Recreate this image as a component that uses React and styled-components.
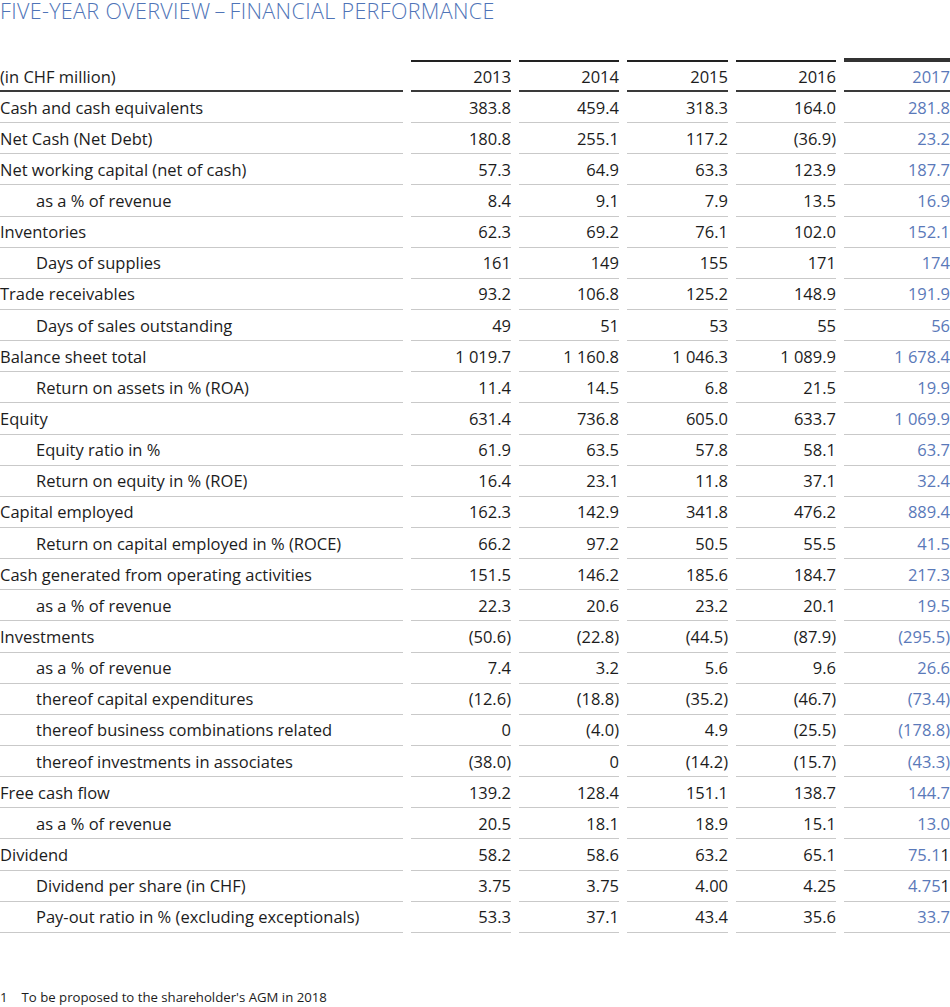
import React from "react";
import styled, { createGlobalStyle } from "styled-components";

const Global = createGlobalStyle`
  html, body { margin: 0; padding: 0; background: #fff; }
  body { font-family: "Open Sans", "Noto Sans", sans-serif; color: #1c1c1c; }
`;

const Page = styled.div`
  width: 950px;
  height: 1007px;
  display: flex;
  flex-direction: column;
  overflow: hidden;
`;

const Title = styled.h1`
  margin: 0;
  font-family: "Open Sans", sans-serif;
  font-weight: 300;
  font-size: 21.5px;
  line-height: 22px;
  letter-spacing: 0.35px;
  color: #4f74b7;
  white-space: nowrap;
`;

const Table = styled.div`
  margin-top: 38px;
  display: grid;
  grid-template-columns: 403px 100px 100px 101px 100px 1fr;
  column-gap: 8px;
`;

const HeadCell = styled.div`
  height: 28px;
  border-top: ${(p) =>
    p.$blank ? "2px solid transparent" : p.$current ? "4px solid #333" : "2px solid #222"};
  margin-top: ${(p) => (p.$current ? "-2px" : "0")};
  border-bottom: 2px solid #3a3a3a;
  display: flex;
  align-items: center;
  justify-content: ${(p) => (p.$label ? "flex-start" : "flex-end")};
  font-size: 16.5px;
  color: ${(p) => (p.$current ? "#5a79b9" : "#1c1c1c")};
  white-space: nowrap;
`;

const Cell = styled.div`
  height: 30.15px;
  border-bottom: 1px solid #c9c9c9;
  display: flex;
  align-items: center;
  justify-content: ${(p) => (p.$label ? "flex-start" : "flex-end")};
  padding-left: ${(p) => (p.$indent ? "36px" : "0")};
  font-size: 16.5px;
  color: ${(p) => (p.$current ? "#5a79b9" : "#1c1c1c")};
  white-space: nowrap;
`;

const Note = styled.span`
  color: #1c1c1c;
`;

const Footnote = styled.div`
  margin-top: auto;
  margin-bottom: 1px;
  display: flex;
  gap: 14px;
  font-size: 13.2px;
  line-height: 18px;
  color: #1c1c1c;
`;

const years = ["2013", "2014", "2015", "2016", "2017"];

const rows = [
  ["Cash and cash equivalents", 0, ["383.8", "459.4", "318.3", "164.0", "281.8"]],
  ["Net Cash (Net Debt)", 0, ["180.8", "255.1", "117.2", "(36.9)", "23.2"]],
  ["Net working capital (net of cash)", 0, ["57.3", "64.9", "63.3", "123.9", "187.7"]],
  ["as a % of revenue", 1, ["8.4", "9.1", "7.9", "13.5", "16.9"]],
  ["Inventories", 0, ["62.3", "69.2", "76.1", "102.0", "152.1"]],
  ["Days of supplies", 1, ["161", "149", "155", "171", "174"]],
  ["Trade receivables", 0, ["93.2", "106.8", "125.2", "148.9", "191.9"]],
  ["Days of sales outstanding", 1, ["49", "51", "53", "55", "56"]],
  ["Balance sheet total", 0, ["1 019.7", "1 160.8", "1 046.3", "1 089.9", "1 678.4"]],
  ["Return on assets in % (ROA)", 1, ["11.4", "14.5", "6.8", "21.5", "19.9"]],
  ["Equity", 0, ["631.4", "736.8", "605.0", "633.7", "1 069.9"]],
  ["Equity ratio in %", 1, ["61.9", "63.5", "57.8", "58.1", "63.7"]],
  ["Return on equity in % (ROE)", 1, ["16.4", "23.1", "11.8", "37.1", "32.4"]],
  ["Capital employed", 0, ["162.3", "142.9", "341.8", "476.2", "889.4"]],
  ["Return on capital employed in % (ROCE)", 1, ["66.2", "97.2", "50.5", "55.5", "41.5"]],
  ["Cash generated from operating activities", 0, ["151.5", "146.2", "185.6", "184.7", "217.3"]],
  ["as a % of revenue", 1, ["22.3", "20.6", "23.2", "20.1", "19.5"]],
  ["Investments", 0, ["(50.6)", "(22.8)", "(44.5)", "(87.9)", "(295.5)"]],
  ["as a % of revenue", 1, ["7.4", "3.2", "5.6", "9.6", "26.6"]],
  ["thereof capital expenditures", 1, ["(12.6)", "(18.8)", "(35.2)", "(46.7)", "(73.4)"]],
  ["thereof business combinations related", 1, ["0", "(4.0)", "4.9", "(25.5)", "(178.8)"]],
  ["thereof investments in associates", 1, ["(38.0)", "0", "(14.2)", "(15.7)", "(43.3)"]],
  ["Free cash flow", 0, ["139.2", "128.4", "151.1", "138.7", "144.7"]],
  ["as a % of revenue", 1, ["20.5", "18.1", "18.9", "15.1", "13.0"]],
  ["Dividend", 0, ["58.2", "58.6", "63.2", "65.1", "75.1"], true],
  ["Dividend per share (in CHF)", 1, ["3.75", "3.75", "4.00", "4.25", "4.75"], true],
  ["Pay-out ratio in % (excluding exceptionals)", 1, ["53.3", "37.1", "43.4", "35.6", "33.7"]],
];

export default function App() {
  return (
    <Page>
      <Global />
      <Title>FIVE-YEAR OVERVIEW{"\u2009\u2013\u2009"}FINANCIAL PERFORMANCE</Title>
      <Table>
        <HeadCell $label $blank>(in CHF million)</HeadCell>
        {years.map((y, i) => (
          <HeadCell key={y} $current={i === 4}>
            {y}
          </HeadCell>
        ))}
        {rows.map(([label, indent, vals, note], r) => (
          <React.Fragment key={r}>
            <Cell $label $indent={!!indent}>
              {label}
            </Cell>
            {vals.map((v, i) => (
              <Cell key={i} $current={i === 4}>
                {v}
                {i === 4 && note ? <Note>1</Note> : null}
              </Cell>
            ))}
          </React.Fragment>
        ))}
      </Table>
      <Footnote>
        <span>1</span>
        <span>To be proposed to the shareholder's AGM in 2018</span>
      </Footnote>
    </Page>
  );
}
